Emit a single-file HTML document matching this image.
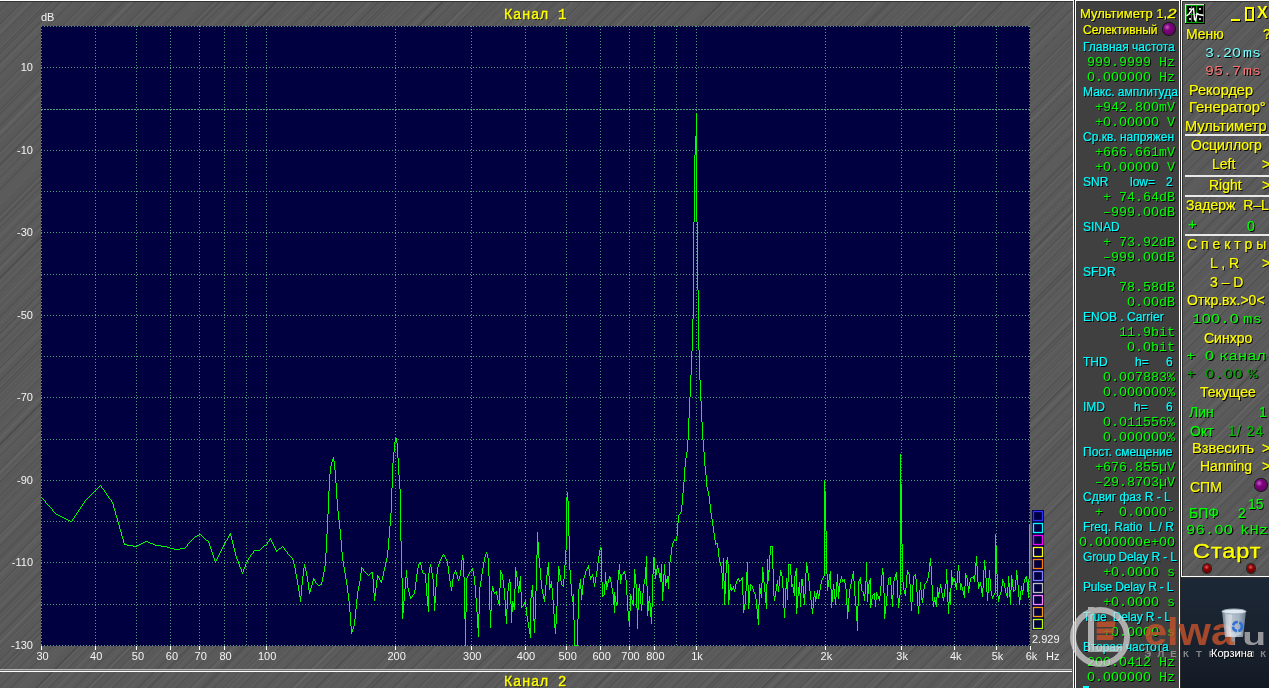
<!DOCTYPE html>
<html><head><meta charset="utf-8"><style>
*{margin:0;padding:0;box-sizing:border-box}
html,body{width:1269px;height:688px;overflow:hidden;background:#1b2535}
#root{position:absolute;left:0;top:0;width:1269px;height:688px;will-change:transform}
.a{position:absolute;white-space:pre}
.tex{background-color:#5a5a5a;background-image:repeating-linear-gradient(135deg, rgba(0,0,0,0) 0px, rgba(0,0,0,0) 7px, rgba(0,0,0,0.11) 8px, rgba(0,0,0,0) 9px),repeating-linear-gradient(135deg, rgba(255,255,255,0) 0px, rgba(255,255,255,0) 3px, rgba(255,255,255,0.04) 4px, rgba(255,255,255,0) 5px),repeating-linear-gradient(135deg, rgba(0,0,0,0) 0px, rgba(0,0,0,0) 13px, rgba(0,0,0,0.10) 14px, rgba(0,0,0,0) 15px),repeating-linear-gradient(135deg, rgba(255,255,255,0) 0px, rgba(255,255,255,0) 21px, rgba(255,255,255,0.05) 22.5px, rgba(255,255,255,0) 24px),repeating-linear-gradient(135deg, rgba(0,0,0,0) 0px, rgba(0,0,0,0) 37px, rgba(0,0,0,0.12) 38px, rgba(0,0,0,0) 39.5px);}
.s{font-family:"Liberation Sans",sans-serif}
.m{font-family:"Liberation Mono",monospace}
.lbl{font:11px/12px "Liberation Sans",sans-serif;color:#f4f4f4}
.mp{font:12px/12px "Liberation Sans",sans-serif;text-shadow:1px 1px 0 #000;-webkit-text-stroke:0.2px currentColor}
.mm{font:12px/12px "Liberation Mono",monospace;transform:scaleX(1.111);transform-origin:0 0;text-shadow:1px 1px 0 #000}
.rm{font:13.5px/14px "Liberation Mono",monospace;transform:scaleX(1.16);transform-origin:0 0;text-shadow:1px 1px 0 #000}
.rp{font:14px/14px "Liberation Sans",sans-serif;text-shadow:1px 1px 0 #000;color:#ffff00;-webkit-text-stroke:0.2px currentColor}
.Y{color:#ffff00} .C{color:#00ffff} .G{color:#00ff00}
</style></head><body><div id="root">
<div class="a tex" style="left:0;top:0;width:1073px;height:688px"></div><div class="a" style="left:0;top:0;width:1073px;height:1px;background:#fff"></div><div class="a" style="left:0;top:1px;width:1073px;height:1px;background:#333"></div><svg class="a" style="left:0;top:0" width="1269" height="688"><rect x="41" y="26" width="989" height="620" fill="#000040"/><line x1="41" y1="26.5" x2="1030" y2="26.5" stroke="#4f9f80" stroke-width="1" stroke-dasharray="1 2" shape-rendering="crispEdges"/><line x1="41" y1="67.5" x2="1030" y2="67.5" stroke="#4f9f80" stroke-width="1" stroke-dasharray="1 2" shape-rendering="crispEdges"/><line x1="41" y1="109.5" x2="1030" y2="109.5" stroke="#4f9f80" stroke-width="1" stroke-dasharray="2 1" shape-rendering="crispEdges"/><line x1="41" y1="150.5" x2="1030" y2="150.5" stroke="#4f9f80" stroke-width="1" stroke-dasharray="1 2" shape-rendering="crispEdges"/><line x1="41" y1="191.5" x2="1030" y2="191.5" stroke="#4f9f80" stroke-width="1" stroke-dasharray="1 2" shape-rendering="crispEdges"/><line x1="41" y1="232.5" x2="1030" y2="232.5" stroke="#4f9f80" stroke-width="1" stroke-dasharray="1 2" shape-rendering="crispEdges"/><line x1="41" y1="274.5" x2="1030" y2="274.5" stroke="#4f9f80" stroke-width="1" stroke-dasharray="1 2" shape-rendering="crispEdges"/><line x1="41" y1="315.5" x2="1030" y2="315.5" stroke="#4f9f80" stroke-width="1" stroke-dasharray="1 2" shape-rendering="crispEdges"/><line x1="41" y1="356.5" x2="1030" y2="356.5" stroke="#4f9f80" stroke-width="1" stroke-dasharray="1 2" shape-rendering="crispEdges"/><line x1="41" y1="397.5" x2="1030" y2="397.5" stroke="#4f9f80" stroke-width="1" stroke-dasharray="1 2" shape-rendering="crispEdges"/><line x1="41" y1="439.5" x2="1030" y2="439.5" stroke="#4f9f80" stroke-width="1" stroke-dasharray="1 2" shape-rendering="crispEdges"/><line x1="41" y1="480.5" x2="1030" y2="480.5" stroke="#4f9f80" stroke-width="1" stroke-dasharray="1 2" shape-rendering="crispEdges"/><line x1="41" y1="521.5" x2="1030" y2="521.5" stroke="#4f9f80" stroke-width="1" stroke-dasharray="1 2" shape-rendering="crispEdges"/><line x1="41" y1="562.5" x2="1030" y2="562.5" stroke="#4f9f80" stroke-width="1" stroke-dasharray="1 2" shape-rendering="crispEdges"/><line x1="41" y1="604.5" x2="1030" y2="604.5" stroke="#4f9f80" stroke-width="1" stroke-dasharray="1 2" shape-rendering="crispEdges"/><line x1="41" y1="645.5" x2="1030" y2="645.5" stroke="#4f9f80" stroke-width="1" stroke-dasharray="1 2" shape-rendering="crispEdges"/><line x1="41.5" y1="26" x2="41.5" y2="646" stroke="#4f9f80" stroke-width="1" stroke-dasharray="1 2" shape-rendering="crispEdges"/><line x1="95.5" y1="26" x2="95.5" y2="646" stroke="#4f9f80" stroke-width="1" stroke-dasharray="1 2" shape-rendering="crispEdges"/><line x1="136.5" y1="26" x2="136.5" y2="646" stroke="#4f9f80" stroke-width="1" stroke-dasharray="1 2" shape-rendering="crispEdges"/><line x1="170.5" y1="26" x2="170.5" y2="646" stroke="#4f9f80" stroke-width="1" stroke-dasharray="1 2" shape-rendering="crispEdges"/><line x1="199.5" y1="26" x2="199.5" y2="646" stroke="#4f9f80" stroke-width="1" stroke-dasharray="1 2" shape-rendering="crispEdges"/><line x1="224.5" y1="26" x2="224.5" y2="646" stroke="#4f9f80" stroke-width="1" stroke-dasharray="1 2" shape-rendering="crispEdges"/><line x1="246.5" y1="26" x2="246.5" y2="646" stroke="#4f9f80" stroke-width="1" stroke-dasharray="1 2" shape-rendering="crispEdges"/><line x1="266.5" y1="26" x2="266.5" y2="646" stroke="#4f9f80" stroke-width="1" stroke-dasharray="1 2" shape-rendering="crispEdges"/><line x1="395.5" y1="26" x2="395.5" y2="646" stroke="#4f9f80" stroke-width="1" stroke-dasharray="1 2" shape-rendering="crispEdges"/><line x1="471.5" y1="26" x2="471.5" y2="646" stroke="#4f9f80" stroke-width="1" stroke-dasharray="1 2" shape-rendering="crispEdges"/><line x1="525.5" y1="26" x2="525.5" y2="646" stroke="#4f9f80" stroke-width="1" stroke-dasharray="1 2" shape-rendering="crispEdges"/><line x1="566.5" y1="26" x2="566.5" y2="646" stroke="#4f9f80" stroke-width="1" stroke-dasharray="1 2" shape-rendering="crispEdges"/><line x1="600.5" y1="26" x2="600.5" y2="646" stroke="#4f9f80" stroke-width="1" stroke-dasharray="1 2" shape-rendering="crispEdges"/><line x1="629.5" y1="26" x2="629.5" y2="646" stroke="#4f9f80" stroke-width="1" stroke-dasharray="1 2" shape-rendering="crispEdges"/><line x1="654.5" y1="26" x2="654.5" y2="646" stroke="#4f9f80" stroke-width="1" stroke-dasharray="1 2" shape-rendering="crispEdges"/><line x1="676.5" y1="26" x2="676.5" y2="646" stroke="#4f9f80" stroke-width="1" stroke-dasharray="1 2" shape-rendering="crispEdges"/><line x1="696.5" y1="26" x2="696.5" y2="646" stroke="#4f9f80" stroke-width="1" stroke-dasharray="1 2" shape-rendering="crispEdges"/><line x1="825.5" y1="26" x2="825.5" y2="646" stroke="#4f9f80" stroke-width="1" stroke-dasharray="1 2" shape-rendering="crispEdges"/><line x1="901.5" y1="26" x2="901.5" y2="646" stroke="#4f9f80" stroke-width="1" stroke-dasharray="1 2" shape-rendering="crispEdges"/><line x1="954.5" y1="26" x2="954.5" y2="646" stroke="#4f9f80" stroke-width="1" stroke-dasharray="1 2" shape-rendering="crispEdges"/><line x1="996.5" y1="26" x2="996.5" y2="646" stroke="#4f9f80" stroke-width="1" stroke-dasharray="1 2" shape-rendering="crispEdges"/><line x1="1029.5" y1="26" x2="1029.5" y2="646" stroke="#4f9f80" stroke-width="1" stroke-dasharray="1 2" shape-rendering="crispEdges"/><line x1="41.5" y1="646" x2="41.5" y2="650" stroke="#fff" stroke-width="1" shape-rendering="crispEdges"/><line x1="95.5" y1="646" x2="95.5" y2="650" stroke="#fff" stroke-width="1" shape-rendering="crispEdges"/><line x1="136.5" y1="646" x2="136.5" y2="650" stroke="#fff" stroke-width="1" shape-rendering="crispEdges"/><line x1="170.5" y1="646" x2="170.5" y2="650" stroke="#fff" stroke-width="1" shape-rendering="crispEdges"/><line x1="199.5" y1="646" x2="199.5" y2="650" stroke="#fff" stroke-width="1" shape-rendering="crispEdges"/><line x1="224.5" y1="646" x2="224.5" y2="650" stroke="#fff" stroke-width="1" shape-rendering="crispEdges"/><line x1="266.5" y1="646" x2="266.5" y2="650" stroke="#fff" stroke-width="1" shape-rendering="crispEdges"/><line x1="395.5" y1="646" x2="395.5" y2="650" stroke="#fff" stroke-width="1" shape-rendering="crispEdges"/><line x1="471.5" y1="646" x2="471.5" y2="650" stroke="#fff" stroke-width="1" shape-rendering="crispEdges"/><line x1="525.5" y1="646" x2="525.5" y2="650" stroke="#fff" stroke-width="1" shape-rendering="crispEdges"/><line x1="566.5" y1="646" x2="566.5" y2="650" stroke="#fff" stroke-width="1" shape-rendering="crispEdges"/><line x1="600.5" y1="646" x2="600.5" y2="650" stroke="#fff" stroke-width="1" shape-rendering="crispEdges"/><line x1="629.5" y1="646" x2="629.5" y2="650" stroke="#fff" stroke-width="1" shape-rendering="crispEdges"/><line x1="654.5" y1="646" x2="654.5" y2="650" stroke="#fff" stroke-width="1" shape-rendering="crispEdges"/><line x1="696.5" y1="646" x2="696.5" y2="650" stroke="#fff" stroke-width="1" shape-rendering="crispEdges"/><line x1="825.5" y1="646" x2="825.5" y2="650" stroke="#fff" stroke-width="1" shape-rendering="crispEdges"/><line x1="901.5" y1="646" x2="901.5" y2="650" stroke="#fff" stroke-width="1" shape-rendering="crispEdges"/><line x1="954.5" y1="646" x2="954.5" y2="650" stroke="#fff" stroke-width="1" shape-rendering="crispEdges"/><line x1="996.5" y1="646" x2="996.5" y2="650" stroke="#fff" stroke-width="1" shape-rendering="crispEdges"/><line x1="1030.5" y1="646" x2="1030.5" y2="650" stroke="#fff" stroke-width="1" shape-rendering="crispEdges"/><path d="M41.5,497V498M42.5,498V499M43.5,499V500M44.5,500V501M45.5,501V503M46.5,503V504M47.5,504V505M48.5,505V506M49.5,506V507M50.5,507V508M51.5,508V509M52.5,509V511M53.5,511V512M54.5,512V513M55.5,513V514M56.5,514V515M57.5,514V515M58.5,515V516M59.5,515V516M60.5,516V517M61.5,516V517M62.5,517V518M63.5,517V518M64.5,518V519M65.5,518V519M66.5,519V520M67.5,519V520M68.5,520V521M69.5,520V521M70.5,521V522M71.5,521V522M72.5,519V521M73.5,518V519M74.5,516V518M75.5,515V516M76.5,513V515M77.5,512V513M78.5,510V512M79.5,509V510M80.5,507V509M81.5,506V507M82.5,504V506M83.5,503V504M84.5,501V503M85.5,500V501M86.5,499V500M87.5,498V499M88.5,497V498M89.5,496V497M90.5,495V496M91.5,494V495M92.5,493V494M93.5,492V493M94.5,491V492M95.5,490V491M96.5,489V490M97.5,488V489M98.5,487V488M99.5,486V487M100.5,485V486M101.5,486V488M102.5,488V489M103.5,489V490M104.5,490V492M105.5,492V493M106.5,493V495M107.5,495V496M108.5,496V498M109.5,498V499M110.5,499V500M111.5,500V502M112.5,502V504M113.5,504V508M114.5,508V511M115.5,511V515M116.5,515V518M117.5,518V522M118.5,522V525M119.5,525V529M120.5,529V532M121.5,532V536M122.5,536V539M123.5,539V543M124.5,543V545M125.5,544V545M126.5,544V545M127.5,545V546M128.5,545V546M129.5,545V546M130.5,545V546M131.5,545V546M132.5,545V546M133.5,546V547M134.5,546V547M135.5,546V547M136.5,546V547M137.5,545V546M138.5,545V546M139.5,544V545M140.5,544V545M141.5,543V544M142.5,543V544M143.5,542V543M144.5,542V543M145.5,541V542M146.5,541V542M147.5,541V542M148.5,542V543M149.5,542V543M150.5,543V544M151.5,543V544M152.5,543V544M153.5,544V545M154.5,544V545M155.5,545V546M156.5,545V546M157.5,545V546M158.5,545V546M159.5,545V546M160.5,545V546M161.5,546V547M162.5,546V547M163.5,546V547M164.5,546V547M165.5,546V547M166.5,546V547M167.5,547V548M168.5,547V548M169.5,547V548M170.5,548V549M171.5,548V549M172.5,548V549M173.5,548V549M174.5,549V550M175.5,549V550M176.5,549V550M177.5,549V550M178.5,549V550M179.5,549V550M180.5,548V549M181.5,548V549M182.5,548V549M183.5,548V549M184.5,548V549M185.5,547V548M186.5,546V547M187.5,544V546M188.5,543V544M189.5,542V543M190.5,541V542M191.5,540V541M192.5,539V540M193.5,538V539M194.5,537V538M195.5,536V537M196.5,536V537M197.5,535V536M198.5,535V536M199.5,534V535M200.5,534V535M201.5,535V536M202.5,536V537M203.5,537V538M204.5,538V539M205.5,539V540M206.5,540V541M207.5,540V541M208.5,541V543M209.5,543V546M210.5,546V549M211.5,549V552M212.5,552V555M213.5,555V558M214.5,558V561M215.5,561V563M216.5,559V561M217.5,557V559M218.5,555V557M219.5,553V555M220.5,551V553M221.5,549V551M222.5,547V549M223.5,545V547M224.5,543V545M225.5,541V543M226.5,540V541M227.5,538V540M228.5,536V538M229.5,534V536M230.5,533V536M231.5,536V540M232.5,540V544M233.5,544V548M234.5,548V552M235.5,552V556M236.5,556V559M237.5,559V561M238.5,561V564M239.5,564V567M240.5,567V569M241.5,569V572M242.5,572V574M243.5,569V572M244.5,567V569M245.5,564V567M246.5,562V564M247.5,560V562M248.5,558V560M249.5,557V558M250.5,555V557M251.5,554V555M252.5,553V554M253.5,551V553M254.5,550V551M255.5,550V551M256.5,550V551M257.5,550V551M258.5,550V551M259.5,550V551M260.5,549V550M261.5,548V549M262.5,547V548M263.5,546V547M264.5,545V546M265.5,545V546M266.5,544V545M267.5,542V544M268.5,541V542M269.5,539V541M270.5,538V540M271.5,540V542M272.5,542V544M273.5,544V546M274.5,546V548M275.5,548V550M276.5,550V552M277.5,550V551M278.5,549V550M279.5,548V549M280.5,548V549M281.5,547V548M282.5,546V547M283.5,547V548M284.5,548V550M285.5,550V551M286.5,551V552M287.5,552V554M288.5,554V555M289.5,555V556M290.5,556V557M291.5,557V558M292.5,558V560M293.5,560V564M294.5,564V568M295.5,568V574M296.5,574V579M297.5,579V585M298.5,585V591M299.5,591V597M300.5,596V602M301.5,585V596M302.5,576V585M303.5,568V576M304.5,564V568M305.5,567V571M306.5,571V576M307.5,576V582M308.5,582V590M309.5,590V594M310.5,588V592M311.5,585V588M312.5,581V585M313.5,578V581M314.5,579V581M315.5,581V583M316.5,583V584M317.5,584V585M318.5,585V586M319.5,585V586M320.5,584V585M321.5,582V585M322.5,577V582M323.5,572V577M324.5,566V572M325.5,553V566M326.5,534V553M327.5,514V534M328.5,491V514M329.5,474V491M330.5,466V474M331.5,462V466M332.5,459V462M333.5,457V461M334.5,461V470M335.5,470V483M336.5,483V499M337.5,499V511M338.5,511V520M339.5,520V529M340.5,529V540M341.5,540V552M342.5,552V561M343.5,561V567M344.5,567V573M345.5,573V579M346.5,579V585M347.5,585V593M348.5,593V601M349.5,601V612M350.5,612V626M351.5,626V634M352.5,629V632M353.5,626V629M354.5,619V626M355.5,609V619M356.5,599V609M357.5,591V599M358.5,586V591M359.5,581V586M360.5,573V581M361.5,567V573M362.5,568V569M363.5,569V571M364.5,571V572M365.5,572V573M366.5,573V574M367.5,574V575M368.5,575V576M369.5,574V575M370.5,573V574M371.5,572V573M372.5,572V579M373.5,579V593M374.5,593V601M375.5,588V596M376.5,580V588M377.5,575V580M378.5,576V578M379.5,578V580M380.5,580V582M381.5,580V583M382.5,576V580M383.5,571V576M384.5,567V571M385.5,562V567M386.5,558V562M387.5,550V558M388.5,538V550M389.5,526V538M390.5,513V526M391.5,488V513M392.5,463V488M393.5,452V463M394.5,442V452M395.5,437V442M396.5,438V443M397.5,443V458M398.5,458V475M399.5,475V489M400.5,489V541M401.5,541V578M402.5,578V619M403.5,601V613M404.5,589V601M405.5,577V589M406.5,570V578M407.5,578V588M408.5,588V592M409.5,592V596M410.5,596V599M411.5,597V598M412.5,595V597M413.5,594V595M414.5,590V594M415.5,582V590M416.5,574V582M417.5,568V574M418.5,564V568M419.5,563V564M420.5,562V565M421.5,565V570M422.5,570V573M423.5,573V574M424.5,573V574M425.5,574V583M426.5,583V596M427.5,596V606M428.5,573V612M429.5,567V573M430.5,564V567M431.5,567V573M432.5,573V579M433.5,579V596M434.5,596V611M435.5,587V603M436.5,574V587M437.5,567V574M438.5,564V567M439.5,561V564M440.5,559V561M441.5,557V559M442.5,555V557M443.5,554V555M444.5,555V557M445.5,557V559M446.5,559V561M447.5,561V566M448.5,566V574M449.5,574V581M450.5,581V587M451.5,587V591M452.5,579V587M453.5,574V579M454.5,572V574M455.5,570V572M456.5,572V575M457.5,575V579M458.5,579V581M459.5,576V579M460.5,570V576M461.5,560V570M462.5,555V560M463.5,558V577M464.5,577V619M465.5,612V646M466.5,578V612M467.5,576V578M468.5,574V576M469.5,572V574M470.5,571V572M471.5,569V571M472.5,568V571M473.5,571V576M474.5,576V585M475.5,585V598M476.5,598V612M477.5,612V628M478.5,614V637M479.5,587V614M480.5,581V587M481.5,574V581M482.5,568V574M483.5,562V568M484.5,557V562M485.5,554V557M486.5,552V554M487.5,554V558M488.5,558V576M489.5,576V610M490.5,610V628M491.5,591V611M492.5,586V591M493.5,588V592M494.5,592V594M495.5,592V593M496.5,591V595M497.5,595V600M498.5,600V604M499.5,588V606M500.5,570V588M501.5,572V574M502.5,574V580M503.5,580V588M504.5,588V600M505.5,600V616M506.5,609V624M507.5,591V609M508.5,583V591M509.5,579V583M510.5,582V604M511.5,604V623M512.5,601V612M513.5,603V607M514.5,589V610M515.5,567V589M516.5,571V577M517.5,577V586M518.5,586V593M519.5,581V589M520.5,576V592M521.5,592V608M522.5,606V607M523.5,604V606M524.5,602V604M525.5,600V607M526.5,607V616M527.5,616V622M528.5,622V628M529.5,628V634M530.5,598V638M531.5,590V598M532.5,585V597M533.5,597V621M534.5,619V633M535.5,591V619M536.5,555V591M537.5,532V555M538.5,542V558M539.5,558V568M540.5,568V580M541.5,580V589M542.5,589V594M543.5,594V599M544.5,596V602M545.5,585V596M546.5,575V585M547.5,567V575M548.5,562V576M549.5,576V590M550.5,584V588M551.5,581V588M552.5,588V600M553.5,600V614M554.5,614V628M555.5,624V634M556.5,606V624M557.5,582V606M558.5,566V582M559.5,569V575M560.5,575V581M561.5,581V585M562.5,585V586M563.5,579V587M564.5,565V579M565.5,550V565M566.5,497V550M567.5,492V501M568.5,501V536M569.5,536V570M570.5,570V584M571.5,584V596M572.5,596V602M573.5,594V620M574.5,620V646M575.5,645V646M576.5,645V646M577.5,619V646M578.5,589V619M579.5,583V589M580.5,579V589M581.5,589V600M582.5,585V595M583.5,578V585M584.5,575V578M585.5,571V575M586.5,569V571M587.5,567V569M588.5,565V569M589.5,569V576M590.5,576V580M591.5,576V578M592.5,574V577M593.5,577V583M594.5,583V587M595.5,577V583M596.5,571V577M597.5,563V571M598.5,556V563M599.5,550V556M600.5,547V550M601.5,548V582M602.5,582V597M603.5,595V596M604.5,584V595M605.5,572V584M606.5,581V590M607.5,583V587M608.5,579V583M609.5,576V579M610.5,577V582M611.5,582V588M612.5,588V594M613.5,594V605M614.5,592V613M615.5,596V602M616.5,602V606M617.5,580V605M618.5,570V580M619.5,564V574M620.5,574V584M621.5,575V580M622.5,574V575M623.5,572V574M624.5,571V574M625.5,574V580M626.5,580V595M627.5,595V611M628.5,611V621M629.5,611V627M630.5,594V611M631.5,596V600M632.5,600V604M633.5,588V606M634.5,569V588M635.5,574V584M636.5,584V608M637.5,608V629M638.5,588V610M639.5,584V591M640.5,591V604M641.5,604V611M642.5,593V605M643.5,584V593M644.5,579V584M645.5,567V579M646.5,556V586M647.5,586V616M648.5,601V611M649.5,596V603M650.5,603V617M651.5,607V624M652.5,574V607M653.5,557V574M654.5,558V569M655.5,569V579M656.5,569V575M657.5,565V569M658.5,568V573M659.5,573V578M660.5,573V582M661.5,564V582M662.5,582V601M663.5,574V592M664.5,564V575M665.5,575V586M666.5,579V583M667.5,576V582M668.5,576V589M669.5,562V576M670.5,555V562M671.5,547V555M672.5,543V547M673.5,541V543M674.5,539V541M675.5,540V541M676.5,536V541M677.5,523V536M678.5,515V523M679.5,514V515M680.5,512V514M681.5,505V512M682.5,493V505M683.5,482V493M684.5,467V482M685.5,458V467M686.5,452V458M687.5,440V452M688.5,418V440M689.5,397V418M690.5,375V397M691.5,351V375M692.5,319V351M693.5,222V319M694.5,155V222M695.5,136V155M696.5,113V222M697.5,222V290M698.5,290V350M699.5,350V380M700.5,380V401M701.5,401V422M702.5,422V440M703.5,440V452M704.5,452V466M705.5,466V475M706.5,475V487M707.5,487V491M708.5,491V496M709.5,496V504M710.5,504V513M711.5,513V519M712.5,519V526M713.5,526V533M714.5,533V540M715.5,540V545M716.5,543V544M717.5,543V548M718.5,548V557M719.5,557V562M720.5,562V566M721.5,566V573M722.5,573V589M723.5,558V581M724.5,581V605M725.5,573V594M726.5,560V573M727.5,557V564M728.5,564V605M729.5,590V600M730.5,584V590M731.5,587V591M732.5,588V590M733.5,586V589M734.5,589V592M735.5,584V589M736.5,581V584M737.5,579V581M738.5,578V580M739.5,580V582M740.5,580V581M741.5,578V580M742.5,577V595M743.5,595V613M744.5,604V610M745.5,591V604M746.5,572V591M747.5,562V585M748.5,585V609M749.5,591V603M750.5,584V591M751.5,585V586M752.5,586V589M753.5,589V592M754.5,592V594M755.5,594V599M756.5,599V609M757.5,609V619M758.5,605V625M759.5,584V605M760.5,588V594M761.5,583V598M762.5,567V583M763.5,572V582M764.5,582V592M765.5,592V603M766.5,584V609M767.5,559V584M768.5,570V581M769.5,555V572M770.5,546V555M771.5,546V547M772.5,546V569M773.5,569V596M774.5,596V601M775.5,591V597M776.5,584V591M777.5,580V586M778.5,586V592M779.5,576V586M780.5,570V576M781.5,572V576M782.5,576V588M783.5,588V608M784.5,608V618M785.5,588V608M786.5,578V589M787.5,582V600M788.5,564V582M789.5,564V565M790.5,564V575M791.5,575V587M792.5,584V587M793.5,587V593M794.5,576V596M795.5,571V576M796.5,568V614M797.5,596V608M798.5,587V596M799.5,582V594M800.5,593V607M801.5,579V593M802.5,579V586M803.5,586V598M804.5,594V605M805.5,573V594M806.5,562V573M807.5,566V573M808.5,573V581M809.5,581V591M810.5,591V600M811.5,600V609M812.5,608V614M813.5,597V608M814.5,591V597M815.5,596V602M816.5,593V599M817.5,590V594M818.5,594V599M819.5,590V596M820.5,584V590M821.5,580V584M822.5,578V580M823.5,576V578M824.5,480V576M825.5,492V531M826.5,531V574M827.5,574V591M828.5,580V587M829.5,574V580M830.5,571V589M831.5,589V608M832.5,590V602M833.5,584V590M834.5,589V599M835.5,597V605M836.5,582V597M837.5,574V586M838.5,586V599M839.5,583V592M840.5,579V583M841.5,576V579M842.5,579V582M843.5,580V581M844.5,579V583M845.5,583V589M846.5,589V605M847.5,605V619M848.5,598V612M849.5,589V598M850.5,584V589M851.5,579V584M852.5,574V579M853.5,571V581M854.5,581V596M855.5,596V606M856.5,606V621M857.5,606V631M858.5,581V606M859.5,579V581M860.5,577V584M861.5,584V591M862.5,591V592M863.5,592V596M864.5,594V601M865.5,581V594M866.5,562V582M867.5,582V602M868.5,584V594M869.5,580V584M870.5,578V608M871.5,599V605M872.5,595V599M873.5,594V595M874.5,593V600M875.5,600V607M876.5,592V600M877.5,594V596M878.5,596V599M879.5,596V601M880.5,586V596M881.5,575V586M882.5,568V575M883.5,572V593M884.5,593V619M885.5,606V614M886.5,596V606M887.5,585V596M888.5,578V585M889.5,577V578M890.5,577V585M891.5,585V599M892.5,595V607M893.5,581V595M894.5,577V581M895.5,574V577M896.5,572V580M897.5,580V598M898.5,598V608M899.5,595V603M900.5,454V595M901.5,484V544M902.5,544V582M903.5,582V590M904.5,590V594M905.5,588V596M906.5,575V588M907.5,570V575M908.5,572V574M909.5,574V584M910.5,584V602M911.5,602V611M912.5,585V602M913.5,576V585M914.5,575V576M915.5,574V579M916.5,579V592M917.5,592V606M918.5,606V614M919.5,590V606M920.5,582V590M921.5,590V600M922.5,598V603M923.5,589V598M924.5,584V589M925.5,583V584M926.5,581V583M927.5,578V581M928.5,572V578M929.5,563V572M930.5,558V566M931.5,566V585M932.5,585V601M933.5,601V607M934.5,597V602M935.5,600V604M936.5,597V607M937.5,587V597M938.5,592V598M939.5,588V594M940.5,584V588M941.5,587V593M942.5,593V598M943.5,597V601M944.5,589V597M945.5,584V589M946.5,569V584M947.5,580V602M948.5,602V614M949.5,592V603M950.5,588V605M951.5,570V588M952.5,577V585M953.5,579V582M954.5,578V581M955.5,581V587M956.5,583V590M957.5,571V583M958.5,565V571M959.5,571V583M960.5,583V590M961.5,584V587M962.5,587V591M963.5,591V595M964.5,586V598M965.5,573V586M966.5,575V578M967.5,578V586M968.5,586V593M969.5,582V589M970.5,578V582M971.5,577V578M972.5,577V578M973.5,576V579M974.5,575V582M975.5,563V575M976.5,556V566M977.5,566V582M978.5,582V589M979.5,584V587M980.5,582V586M981.5,586V593M982.5,588V597M983.5,570V588M984.5,560V570M985.5,566V578M986.5,578V592M987.5,592V601M988.5,578V593M989.5,570V579M990.5,579V591M991.5,591V596M992.5,596V599M993.5,595V597M994.5,593V595M995.5,534V593M996.5,546V574M997.5,574V596M998.5,596V602M999.5,595V599M1000.5,592V595M1001.5,586V592M1002.5,579V586M1003.5,581V583M1004.5,583V588M1005.5,588V593M1006.5,593V596M1007.5,587V598M1008.5,576V587M1009.5,583V597M1010.5,590V605M1011.5,575V590M1012.5,579V587M1013.5,587V592M1014.5,590V591M1015.5,580V590M1016.5,570V580M1017.5,575V585M1018.5,585V597M1019.5,597V605M1020.5,591V600M1021.5,586V591M1022.5,590V595M1023.5,583V591M1024.5,579V583M1025.5,577V579M1026.5,576V582M1027.5,582V592M1028.5,579V598M1029.5,524V579" fill="none" stroke="#00ff00" stroke-width="1" shape-rendering="crispEdges"/><rect x="1032" y="510" width="12" height="120" fill="#000040"/><rect x="1033.5" y="511.5" width="9" height="9" fill="none" stroke="#3030ff" stroke-width="1.3"/><rect x="1033.5" y="523.5" width="9" height="9" fill="none" stroke="#00ffff" stroke-width="1.3"/><rect x="1033.5" y="535.5" width="9" height="9" fill="none" stroke="#ff00ff" stroke-width="1.3"/><rect x="1033.5" y="547.5" width="9" height="9" fill="none" stroke="#ffff00" stroke-width="1.3"/><rect x="1033.5" y="559.5" width="9" height="9" fill="none" stroke="#ff8000" stroke-width="1.3"/><rect x="1033.5" y="571.5" width="9" height="9" fill="none" stroke="#8080ff" stroke-width="1.3"/><rect x="1033.5" y="583.5" width="9" height="9" fill="none" stroke="#c0c0c0" stroke-width="1.3"/><rect x="1033.5" y="595.5" width="9" height="9" fill="none" stroke="#ff80ff" stroke-width="1.3"/><rect x="1033.5" y="607.5" width="9" height="9" fill="none" stroke="#ffa000" stroke-width="1.3"/><rect x="1033.5" y="619.5" width="9" height="9" fill="none" stroke="#c0ff00" stroke-width="1.3"/></svg><div class="a lbl" style="right:1236px;top:61px;text-align:right">10</div><div class="a lbl" style="right:1236px;top:144px;text-align:right">-10</div><div class="a lbl" style="right:1236px;top:226px;text-align:right">-30</div><div class="a lbl" style="right:1236px;top:309px;text-align:right">-50</div><div class="a lbl" style="right:1236px;top:391px;text-align:right">-70</div><div class="a lbl" style="right:1236px;top:474px;text-align:right">-90</div><div class="a lbl" style="right:1236px;top:556px;text-align:right">-110</div><div class="a lbl" style="right:1236px;top:639px;text-align:right">-130</div><div class="a lbl" style="left:41px;top:11px">dB</div><div class="a lbl" style="left:22.5px;width:40px;text-align:center;top:650px">30</div><div class="a lbl" style="left:76.2px;width:40px;text-align:center;top:650px">40</div><div class="a lbl" style="left:117.9px;width:40px;text-align:center;top:650px">50</div><div class="a lbl" style="left:151.9px;width:40px;text-align:center;top:650px">60</div><div class="a lbl" style="left:180.7px;width:40px;text-align:center;top:650px">70</div><div class="a lbl" style="left:205.6px;width:40px;text-align:center;top:650px">80</div><div class="a lbl" style="left:247.2px;width:40px;text-align:center;top:650px">100</div><div class="a lbl" style="left:376.6px;width:40px;text-align:center;top:650px">200</div><div class="a lbl" style="left:452.3px;width:40px;text-align:center;top:650px">300</div><div class="a lbl" style="left:506.0px;width:40px;text-align:center;top:650px">400</div><div class="a lbl" style="left:547.7px;width:40px;text-align:center;top:650px">500</div><div class="a lbl" style="left:581.7px;width:40px;text-align:center;top:650px">600</div><div class="a lbl" style="left:610.5px;width:40px;text-align:center;top:650px">700</div><div class="a lbl" style="left:635.4px;width:40px;text-align:center;top:650px">800</div><div class="a lbl" style="left:677.0px;width:40px;text-align:center;top:650px">1k</div><div class="a lbl" style="left:806.4px;width:40px;text-align:center;top:650px">2k</div><div class="a lbl" style="left:882.1px;width:40px;text-align:center;top:650px">3k</div><div class="a lbl" style="left:935.8px;width:40px;text-align:center;top:650px">4k</div><div class="a lbl" style="left:977.5px;width:40px;text-align:center;top:650px">5k</div><div class="a lbl" style="left:1011.5px;width:40px;text-align:center;top:650px">6k</div><div class="a lbl" style="left:1046px;top:650px">Hz</div><div class="a lbl" style="left:1032px;top:633px">2.929</div><div class="a m" style="left:504px;top:8px;font:14px/14px 'Liberation Mono',monospace;letter-spacing:0.6px;-webkit-text-stroke:0.35px #ffff00;color:#ffff00;text-shadow:1px 1px 0 rgba(0,0,0,0.6)">Канал 1</div><div class="a m" style="left:504px;top:675px;font:14px/14px 'Liberation Mono',monospace;letter-spacing:0.6px;-webkit-text-stroke:0.35px #ffff00;color:#ffff00;text-shadow:1px 1px 0 rgba(0,0,0,0.6)">Канал 2</div><div class="a" style="left:0;top:669px;width:1072px;height:1px;background:#b8b8b8"></div><div class="a" style="left:0;top:670px;width:1072px;height:1px;background:#707070"></div><div class="a" style="left:0;top:671px;width:1072px;height:1px;background:#ffffff"></div><div class="a" style="left:1073px;top:0;width:1px;height:688px;background:#fff"></div><div class="a" style="left:1074px;top:0;width:1px;height:688px;background:#2a2a2a"></div><div class="a" style="left:1075px;top:0;width:1px;height:688px;background:#fff"></div><div class="a" style="left:1076px;top:0;width:103px;height:688px;background:#404040;border-top:1px solid #fff"></div><div class="a" style="left:1076px;top:1px;width:103px;height:1px;background:#303030"></div><div class="a" style="left:1076px;top:1px;width:1px;height:687px;background:#3b3b3b"></div><div class="a" style="left:1179px;top:0;width:1px;height:688px;background:#fff"></div><div class="a" style="left:1180px;top:0;width:1px;height:688px;background:#2a2a2a"></div><div class="a tex" style="left:1181px;top:0;width:88px;height:578px"></div><div class="a" style="left:1181px;top:0;width:88px;height:1px;background:#fff"></div><div class="a" style="left:1181px;top:0;width:1px;height:577px;background:#fff"></div><div class="a" style="left:1182px;top:1px;width:87px;height:1px;background:#333"></div><div class="a" style="left:1182px;top:1px;width:1px;height:576px;background:#333"></div><div class="a" style="left:1181px;top:576px;width:88px;height:1px;background:#fff"></div><div class="a" style="left:1181px;top:577px;width:88px;height:1px;background:#333"></div><div class="a mp Y" style="left:1080px;top:8px;font-size:13px">Мультиметр 1,<span style="font:italic 13px/12px 'Liberation Mono';-webkit-text-stroke:0.3px currentColor;display:inline-block;transform:scaleX(1.25);transform-origin:0 0">2</span></div><div class="a mp Y" style="left:1083px;top:24px">Селективный</div><div class="a mp C" style="left:1083px;top:41px">Главная частота</div><div class="a mm G" style="left:1087px;top:57px">999.9999 Hz</div><div class="a mm G" style="left:1087px;top:72px">O.OOOOOO Hz</div><div class="a mp C" style="left:1083px;top:86px">Макс. амплитуда</div><div class="a mm G" style="left:1095px;top:102px">+942.8OOmV</div><div class="a mm G" style="left:1095px;top:117px">+O.OOOOO V</div><div class="a mp C" style="left:1083px;top:131px">Ср.кв. напряжен</div><div class="a mm G" style="left:1095px;top:147px">+666.661mV</div><div class="a mm G" style="left:1095px;top:162px">+O.OOOOO V</div><div class="a mp C" style="left:1083px;top:176px">SNR</div><div class="a mm G" style="left:1103px;top:192px">+ 74.64dB</div><div class="a mm G" style="left:1103px;top:207px">–999.OOdB</div><div class="a mp C" style="left:1083px;top:221px">SINAD</div><div class="a mm G" style="left:1103px;top:237px">+ 73.92dB</div><div class="a mm G" style="left:1103px;top:252px">–999.OOdB</div><div class="a mp C" style="left:1083px;top:266px">SFDR</div><div class="a mm G" style="left:1119px;top:282px">78.58dB</div><div class="a mm G" style="left:1127px;top:297px">O.OOdB</div><div class="a mp C" style="left:1083px;top:311px">ENOB . Carrier</div><div class="a mm G" style="left:1119px;top:327px">11.9bit</div><div class="a mm G" style="left:1127px;top:342px">O.Obit</div><div class="a mp C" style="left:1083px;top:356px">THD</div><div class="a mm G" style="left:1103px;top:372px">O.OO7883%</div><div class="a mm G" style="left:1103px;top:387px">O.OOOOOO%</div><div class="a mp C" style="left:1083px;top:401px">IMD</div><div class="a mm G" style="left:1103px;top:417px">O.O11556%</div><div class="a mm G" style="left:1103px;top:432px">O.OOOOOO%</div><div class="a mp C" style="left:1083px;top:446px">Пост. смещение</div><div class="a mm G" style="left:1095px;top:462px">+676.855µV</div><div class="a mm G" style="left:1095px;top:477px">–29.87O3µV</div><div class="a mp C" style="left:1083px;top:491px">Сдвиг фаз R - L</div><div class="a mm G" style="left:1095px;top:507px">+  O.OOOO°</div><div class="a mp C" style="left:1083px;top:521px">Freq. Ratio  L / R</div><div class="a mm G" style="left:1079px;top:537px">O.OOOOOOe+OO</div><div class="a mp C" style="left:1083px;top:551px;letter-spacing:-0.18px">Group Delay R - L</div><div class="a mm G" style="left:1103px;top:567px">+O.OOOO s</div><div class="a mp C" style="left:1083px;top:581px;letter-spacing:-0.18px">Pulse Delay R - L</div><div class="a mm G" style="left:1103px;top:597px">+O.OOOO s</div><div class="a mp C" style="left:1083px;top:611px;letter-spacing:-0.18px">True  Delay R - L</div><div class="a mm G" style="left:1103px;top:627px">+O.OOOO s</div><div class="a mp C" style="left:1083px;top:641px">Вторая частота</div><div class="a mm G" style="left:1087px;top:657px">2OO.O412 Hz</div><div class="a mm G" style="left:1087px;top:672px">O.OOOOOO Hz</div><div class="a" style="left:1083px;top:686px;width:6px;height:2px;background:#00ffff;box-shadow:1px 1px 0 #000"></div><div class="a mp C" style="left:1130px;top:176px">low=</div><div class="a mp C" style="left:1166px;top:176px">2</div><div class="a mp C" style="left:1135px;top:356px">h=</div><div class="a mp C" style="left:1166px;top:356px">6</div><div class="a mp C" style="left:1134px;top:401px">h=</div><div class="a mp C" style="left:1166px;top:401px">6</div><div class="a" style="left:1163px;top:23px;width:12px;height:12px;border-radius:50%;background:radial-gradient(circle at 35% 35%, #c060c0 0, #800080 30%, #500050 100%);box-shadow:0 0 0 1px #111"></div><div class="a" style="left:1255px;top:479px;width:12px;height:12px;border-radius:50%;background:radial-gradient(circle at 35% 35%, #c060c0 0, #800080 30%, #500050 100%);box-shadow:0 0 0 1px #111"></div><div class="a rp" style="left:1186px;top:27px;font-size:14px">Меню</div><div class="a rp" style="left:1189px;top:83px;font-size:14.5px">Рекордер</div><div class="a rp" style="left:1189px;top:100px;font-size:14.8px">Генератор°</div><div class="a rp" style="left:1185px;top:119px;font-size:14.6px">Мультиметр</div><div class="a rp" style="left:1191px;top:138px;font-size:14px">Осциллогр</div><div class="a rp" style="left:1212px;top:157px;font-size:14px">Left</div><div class="a rp" style="left:1209px;top:178px;font-size:14px">Right</div><div class="a rp" style="left:1186px;top:198px;font-size:14px">Задерж  R–L</div><div class="a rp" style="left:1187px;top:237px;font-size:14px">С п е к т р ы</div><div class="a rp" style="left:1210px;top:256px;font-size:14px">L , R</div><div class="a rp" style="left:1210px;top:275px;font-size:14px">3 – D</div><div class="a rp" style="left:1187px;top:293px;font-size:14px">Откр.вх.>0<</div><div class="a rp" style="left:1204px;top:331px;font-size:14px">Синхро</div><div class="a rp" style="left:1200px;top:385px;font-size:14px">Текущее</div><div class="a rp" style="left:1192px;top:441px;font-size:14.7px">Взвесить</div><div class="a rp" style="left:1200px;top:459px;font-size:14px">Hanning</div><div class="a rp" style="left:1190px;top:480px;font-size:14px">СПМ</div><div class="a rp" style="left:1262px;top:157px">&gt;</div><div class="a rp" style="left:1262px;top:178px">&gt;</div><div class="a rp" style="left:1262px;top:256px">&gt;</div><div class="a rp" style="left:1262px;top:441px">&gt;</div><div class="a rp" style="left:1262px;top:459px">&gt;</div><div class="a rp" style="left:1263px;top:27px">?</div><div class="a" style="left:1185px;top:134px;width:84px;height:2px;background:#e8e8e8"></div><div class="a" style="left:1185px;top:175px;width:84px;height:2px;background:#e8e8e8"></div><div class="a" style="left:1185px;top:195px;width:84px;height:2px;background:#e8e8e8"></div><div class="a" style="left:1185px;top:234px;width:84px;height:2px;background:#e8e8e8"></div><div class="a rm" style="left:1205px;top:47px;color:#70ffff;transform:scaleX(1.111)">3.2O</div><div class="a rm" style="left:1243px;top:47px;color:#70ffff;transform:scaleX(1.111)">ms</div><div class="a rm" style="left:1205px;top:65px;color:#ff7070;transform:scaleX(1.111)">95.7</div><div class="a rm" style="left:1243px;top:65px;color:#ff7070;transform:scaleX(1.111)">ms</div><div class="a rm G" style="left:1192px;top:313px">1OO.O</div><div class="a rm G" style="left:1243px;top:313px">ms</div><div class="a rm G" style="left:1186px;top:350px">+ O</div><div class="a rm G" style="left:1219px;top:350px">канал</div><div class="a rm" style="left:1186px;top:368px;color:#00a000">+ O.OO</div><div class="a rm" style="left:1248px;top:368px;color:#00a000">%</div><div class="a rp G" style="left:1188px;top:217px;font-size:15px">+</div><div class="a rp G" style="left:1247px;top:219px">0</div><div class="a rp G" style="left:1189px;top:405px">Лин</div><div class="a rp G" style="left:1259px;top:405px">1</div><div class="a rp G" style="left:1190px;top:424px">Окт</div><div class="a rp" style="left:1228px;top:424px;color:#00c000;letter-spacing:1px">1/ 24</div><div class="a rp G" style="left:1189px;top:506px">БПФ</div><div class="a rp G" style="left:1238px;top:506px">2</div><div class="a rp G" style="left:1248px;top:497px">15</div><div class="a rm G" style="left:1186px;top:524px">96.OO</div><div class="a rm G" style="left:1240px;top:524px">kHz</div><div class="a s" style="left:1193px;top:540px;font-size:21px;line-height:22px;letter-spacing:0.8px;transform:scaleX(1.12);transform-origin:0 0;-webkit-text-stroke:0.4px #ffff00;color:#ffff00;text-shadow:1px 1px 0 #000">Старт</div><div class="a" style="left:1203px;top:564px;width:8px;height:9px;border-radius:50%;background:radial-gradient(circle at 45% 35%, #e06060 0, #900000 35%, #500000 100%);box-shadow:0 0 0 1px #222"></div><div class="a" style="left:1247px;top:564px;width:8px;height:9px;border-radius:50%;background:radial-gradient(circle at 45% 35%, #e06060 0, #900000 35%, #500000 100%);box-shadow:0 0 0 1px #222"></div><svg class="a" style="left:1185px;top:4px" width="20" height="20" shape-rendering="crispEdges"><rect x="0" y="0" width="20" height="20" fill="#000"/><rect x="0" y="0" width="19" height="1" fill="#e0e0e0"/><rect x="0" y="0" width="1" height="19" fill="#e0e0e0"/><g fill="none" stroke="#00a000" stroke-width="1"><rect x="1.5" y="1.5" width="17" height="17"/><line x1="6.5" y1="1" x2="6.5" y2="19"/><line x1="11.5" y1="1" x2="11.5" y2="19"/><line x1="1" y1="10.5" x2="19" y2="10.5"/></g><g fill="#c8c8c8"><rect x="4" y="4" width="2" height="2"/><rect x="14" y="4" width="2" height="2"/><rect x="4" y="14" width="2" height="2"/><rect x="14" y="14" width="2" height="2"/></g></svg><svg class="a" style="left:1185px;top:4px" width="20" height="20"><polyline points="1.5,12 4,10 7,5.5 8.5,4.5 9.5,15.5 10.5,16.5 12,9.5 14,10.5 18.5,11.5" fill="none" stroke="#fff" stroke-width="1.4"/></svg><div class="a" style="left:1231px;top:19px;width:9px;height:2px;background:#ffff00;box-shadow:1px 1px 0 #000"></div><div class="a" style="left:1245px;top:7px;width:9px;height:14px;border:2px solid #ffff00;box-shadow:1px 1px 0 #000, inset 1px 1px 0 #000"></div><div class="a s" style="left:1257px;top:4px;font:bold 16px/17px 'Liberation Sans';color:#ffff00;text-shadow:1px 1px 0 #000">X</div><div class="a" style="left:1181px;top:578px;width:88px;height:110px;background:linear-gradient(180deg,#1d2837 0%,#18212d 60%,#131a24 100%)"></div><svg class="a" style="left:1060px;top:595px" width="209" height="93"><g opacity="0.72"><circle cx="40" cy="42" r="27" fill="none" stroke="#d8d8d8" stroke-width="6"/><rect x="28" y="12" width="6" height="45" fill="#d8d8d8"/><rect x="28" y="51" width="38" height="6" fill="#d8d8d8"/></g><g opacity="0.85" fill="#c4522c"><path d="M36.7,26.5 L55.6,26.5 L54.7,32 L36.7,32 Z"/><path d="M36.7,33.5 L54.5,33.5 L53.7,38.5 L36.7,38.5 Z"/><path d="M36.7,40 L53.5,40 L52.7,45 L36.7,45 Z"/></g><text x="167" y="50" font-family="Liberation Sans" font-weight="bold" font-size="24" fill="#b4b4b4" opacity="0.8" textLength="39" lengthAdjust="spacingAndGlyphs">ru</text><text x="84" y="50" font-family="Liberation Sans" font-weight="bold" font-size="38" fill="#c4522c" opacity="0.82" textLength="90" lengthAdjust="spacingAndGlyphs">elwa</text><text x="84.6 97.4 110.3 123.1 136.0 148.8 161.7 174.6 187.4 200.2 213.1" y="62" font-family="Liberation Sans" font-weight="bold" font-size="9.5" fill="#9a9a9a" opacity="0.85">ЭЛЕКТРОНИКА</text></svg><svg class="a" style="left:1220px;top:608px" width="28" height="31"><defs><linearGradient id="bg" x1="0" x2="1"><stop offset="0" stop-color="#8ea2b6"/><stop offset="0.35" stop-color="#e4eef8"/><stop offset="0.7" stop-color="#c8d8e8"/><stop offset="1" stop-color="#7a8ea2"/></linearGradient></defs><path d="M2,3 L26,3 L23,29 L5,29 Z" fill="url(#bg)" opacity="0.8"/><path d="M5,5 L12,5 L11,28 L7,28 Z" fill="#ffffff" opacity="0.35"/><ellipse cx="14" cy="3.5" rx="12" ry="2.5" fill="#dfe8f0" stroke="#9aaabb" stroke-width="1"/><circle cx="17.5" cy="18.5" r="4.5" fill="none" stroke="#2f6fd6" stroke-width="2.6" stroke-dasharray="6 1.5"/></svg><div class="a s" style="left:1211px;top:647px;font:11px/12px 'Liberation Sans';color:#fff;text-shadow:1px 1px 1px #000">Корзина</div>
</div></body></html>
